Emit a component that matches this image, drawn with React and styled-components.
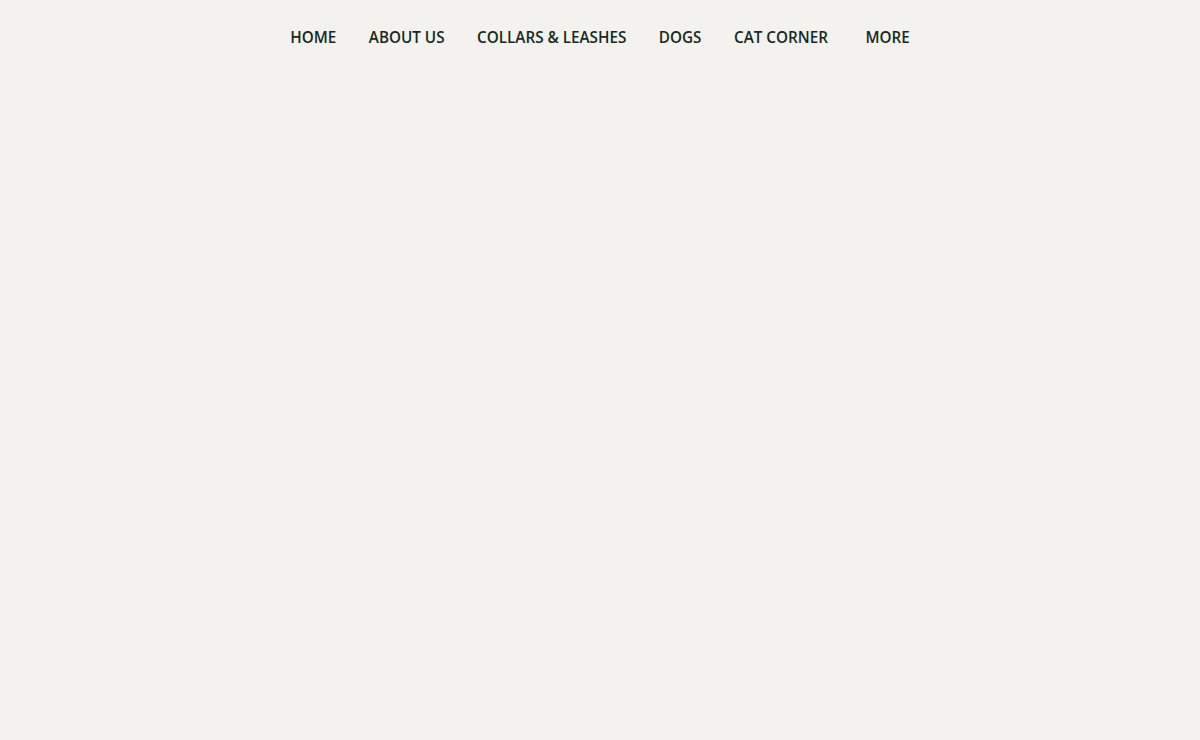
import styled, { createGlobalStyle } from "styled-components";

const GlobalStyle = createGlobalStyle`
  html, body {
    margin: 0;
    padding: 0;
    background: #f3f2ee;
  }
  body {
    font-family: "Open Sans", "Liberation Sans", sans-serif;
  }
`;

const Page = styled.div`
  width: 100%;
  min-height: 740px;
  background: #f3f2ee;
`;

const Nav = styled.nav`
  display: flex;
  justify-content: center;
  padding-top: 26px;
`;

const Menu = styled.ul`
  display: flex;
  align-items: center;
  gap: 32.5px;
  list-style: none;
  margin: 0;
  padding: 0;
`;

const MenuItem = styled.li`
  margin-left: ${(props) => (props.more ? "5px" : "0")};
`;

const MenuLink = styled.a`
  display: block;
  font-size: 15.25px;
  font-weight: 600;
  line-height: 22px;
  color: #17291f;
  text-decoration: none;
  white-space: nowrap;
  cursor: pointer;
`;

const items = ["HOME", "ABOUT US", "COLLARS & LEASHES", "DOGS", "CAT CORNER"];

export default function App() {
  return (
    <Page>
      <GlobalStyle />
      <Nav>
        <Menu>
          {items.map((item) => (
            <MenuItem key={item}>
              <MenuLink>{item}</MenuLink>
            </MenuItem>
          ))}
          <MenuItem more>
            <MenuLink>MORE</MenuLink>
          </MenuItem>
        </Menu>
      </Nav>
    </Page>
  );
}
